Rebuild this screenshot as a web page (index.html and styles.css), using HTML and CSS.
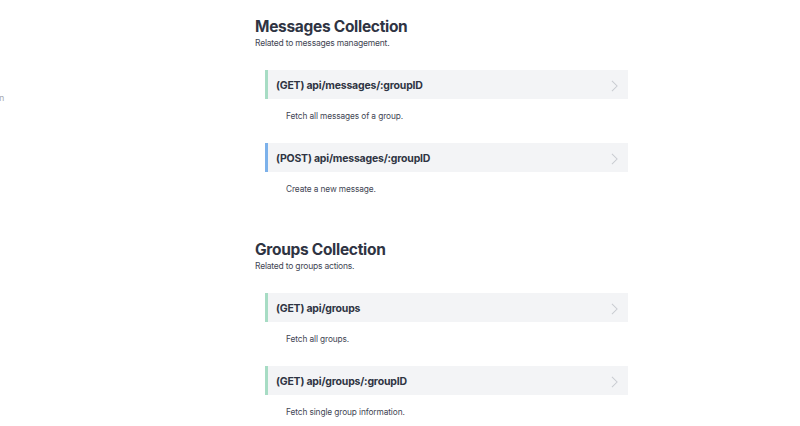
FILE: index.html
```html
<!DOCTYPE html>
<html lang="en">
<head>
<meta charset="utf-8">
<title>API Docs</title>
<link rel="stylesheet" href="styles.css">
</head>
<body>
<aside class="sidebar"><span class="side-item">Version</span></aside>
<main class="content">
  <section class="collection">
    <h1 class="col-title">Messages Collection</h1>
    <p class="col-sub">Related to messages management.</p>
    <div class="endpoints">
      <div class="endpoint">
        <div class="card get"><span class="card-title">(GET) api/messages/:groupID</span>
          <svg class="chev" viewBox="0 0 8 14" width="7" height="12"><path d="M1 1 L7 7 L1 13" fill="none" stroke="#c9ccd1" stroke-width="1.2"/></svg></div>
        <p class="desc">Fetch all messages of a group.</p>
      </div>
      <div class="endpoint">
        <div class="card post"><span class="card-title">(POST) api/messages/:groupID</span>
          <svg class="chev" viewBox="0 0 8 14" width="7" height="12"><path d="M1 1 L7 7 L1 13" fill="none" stroke="#c9ccd1" stroke-width="1.2"/></svg></div>
        <p class="desc">Create a new message.</p>
      </div>
    </div>
  </section>
  <section class="collection">
    <h1 class="col-title">Groups Collection</h1>
    <p class="col-sub">Related to groups actions.</p>
    <div class="endpoints">
      <div class="endpoint">
        <div class="card get"><span class="card-title">(GET) api/groups</span>
          <svg class="chev" viewBox="0 0 8 14" width="7" height="12"><path d="M1 1 L7 7 L1 13" fill="none" stroke="#c9ccd1" stroke-width="1.2"/></svg></div>
        <p class="desc">Fetch all groups.</p>
      </div>
      <div class="endpoint">
        <div class="card get"><span class="card-title">(GET) api/groups/:groupID</span>
          <svg class="chev" viewBox="0 0 8 14" width="7" height="12"><path d="M1 1 L7 7 L1 13" fill="none" stroke="#c9ccd1" stroke-width="1.2"/></svg></div>
        <p class="desc">Fetch single group information.</p>
      </div>
    </div>
  </section>
</main>
</body>
</html>
```
FILE: styles.css
```css
html, body {
  margin: 0;
  padding: 0;
  background: #ffffff;
  font-family: Inter, "Noto Sans", "Liberation Sans", sans-serif;
  color: #374151;
  overflow: hidden;
}
body {
  position: relative;
  width: 800px;
  height: 426px;
}
.sidebar {
  position: absolute;
  left: 0;
  top: 92px;
  width: 7px;
  overflow: hidden;
}
.side-item {
  display: block;
  margin-left: -26px;
  font-size: 8.5px;
  line-height: 12px;
  color: #a4a8b0;
  white-space: nowrap;
}
.content {
  margin-left: 255px;
  width: 373px;
  padding-top: 17px;
}
.collection + .collection {
  margin-top: 45px;
}
.col-title {
  margin: 0;
  font-size: 15.5px;
  line-height: 19px;
  font-weight: 700;
  color: #2f3443;
  letter-spacing: -0.3px;
}
.col-sub {
  margin: 1px 0 0;
  font-size: 8.5px;
  line-height: 12px;
  color: #3f4654;
  letter-spacing: -0.2px;
}
.endpoints {
  margin-top: 21px;
  padding-left: 10px;
  display: flex;
  flex-direction: column;
  gap: 21px;
}
.card {
  height: 29px;
  box-sizing: border-box;
  background: #f3f4f6;
  border-left: 3px solid #a7dcc4;
  display: flex;
  align-items: center;
  justify-content: space-between;
  padding: 2px 10px 0 8px;
}
.card.post {
  border-left-color: #7cb1ea;
}
.card-title {
  font-size: 10.5px;
  font-weight: 700;
  color: #2f3443;
  letter-spacing: -0.2px;
}
.chev {
  display: block;
}
.desc {
  margin: 11px 0 0;
  padding-left: 21px;
  font-size: 8.3px;
  line-height: 12px;
  color: #3f4654;
  letter-spacing: -0.1px;
}
```
